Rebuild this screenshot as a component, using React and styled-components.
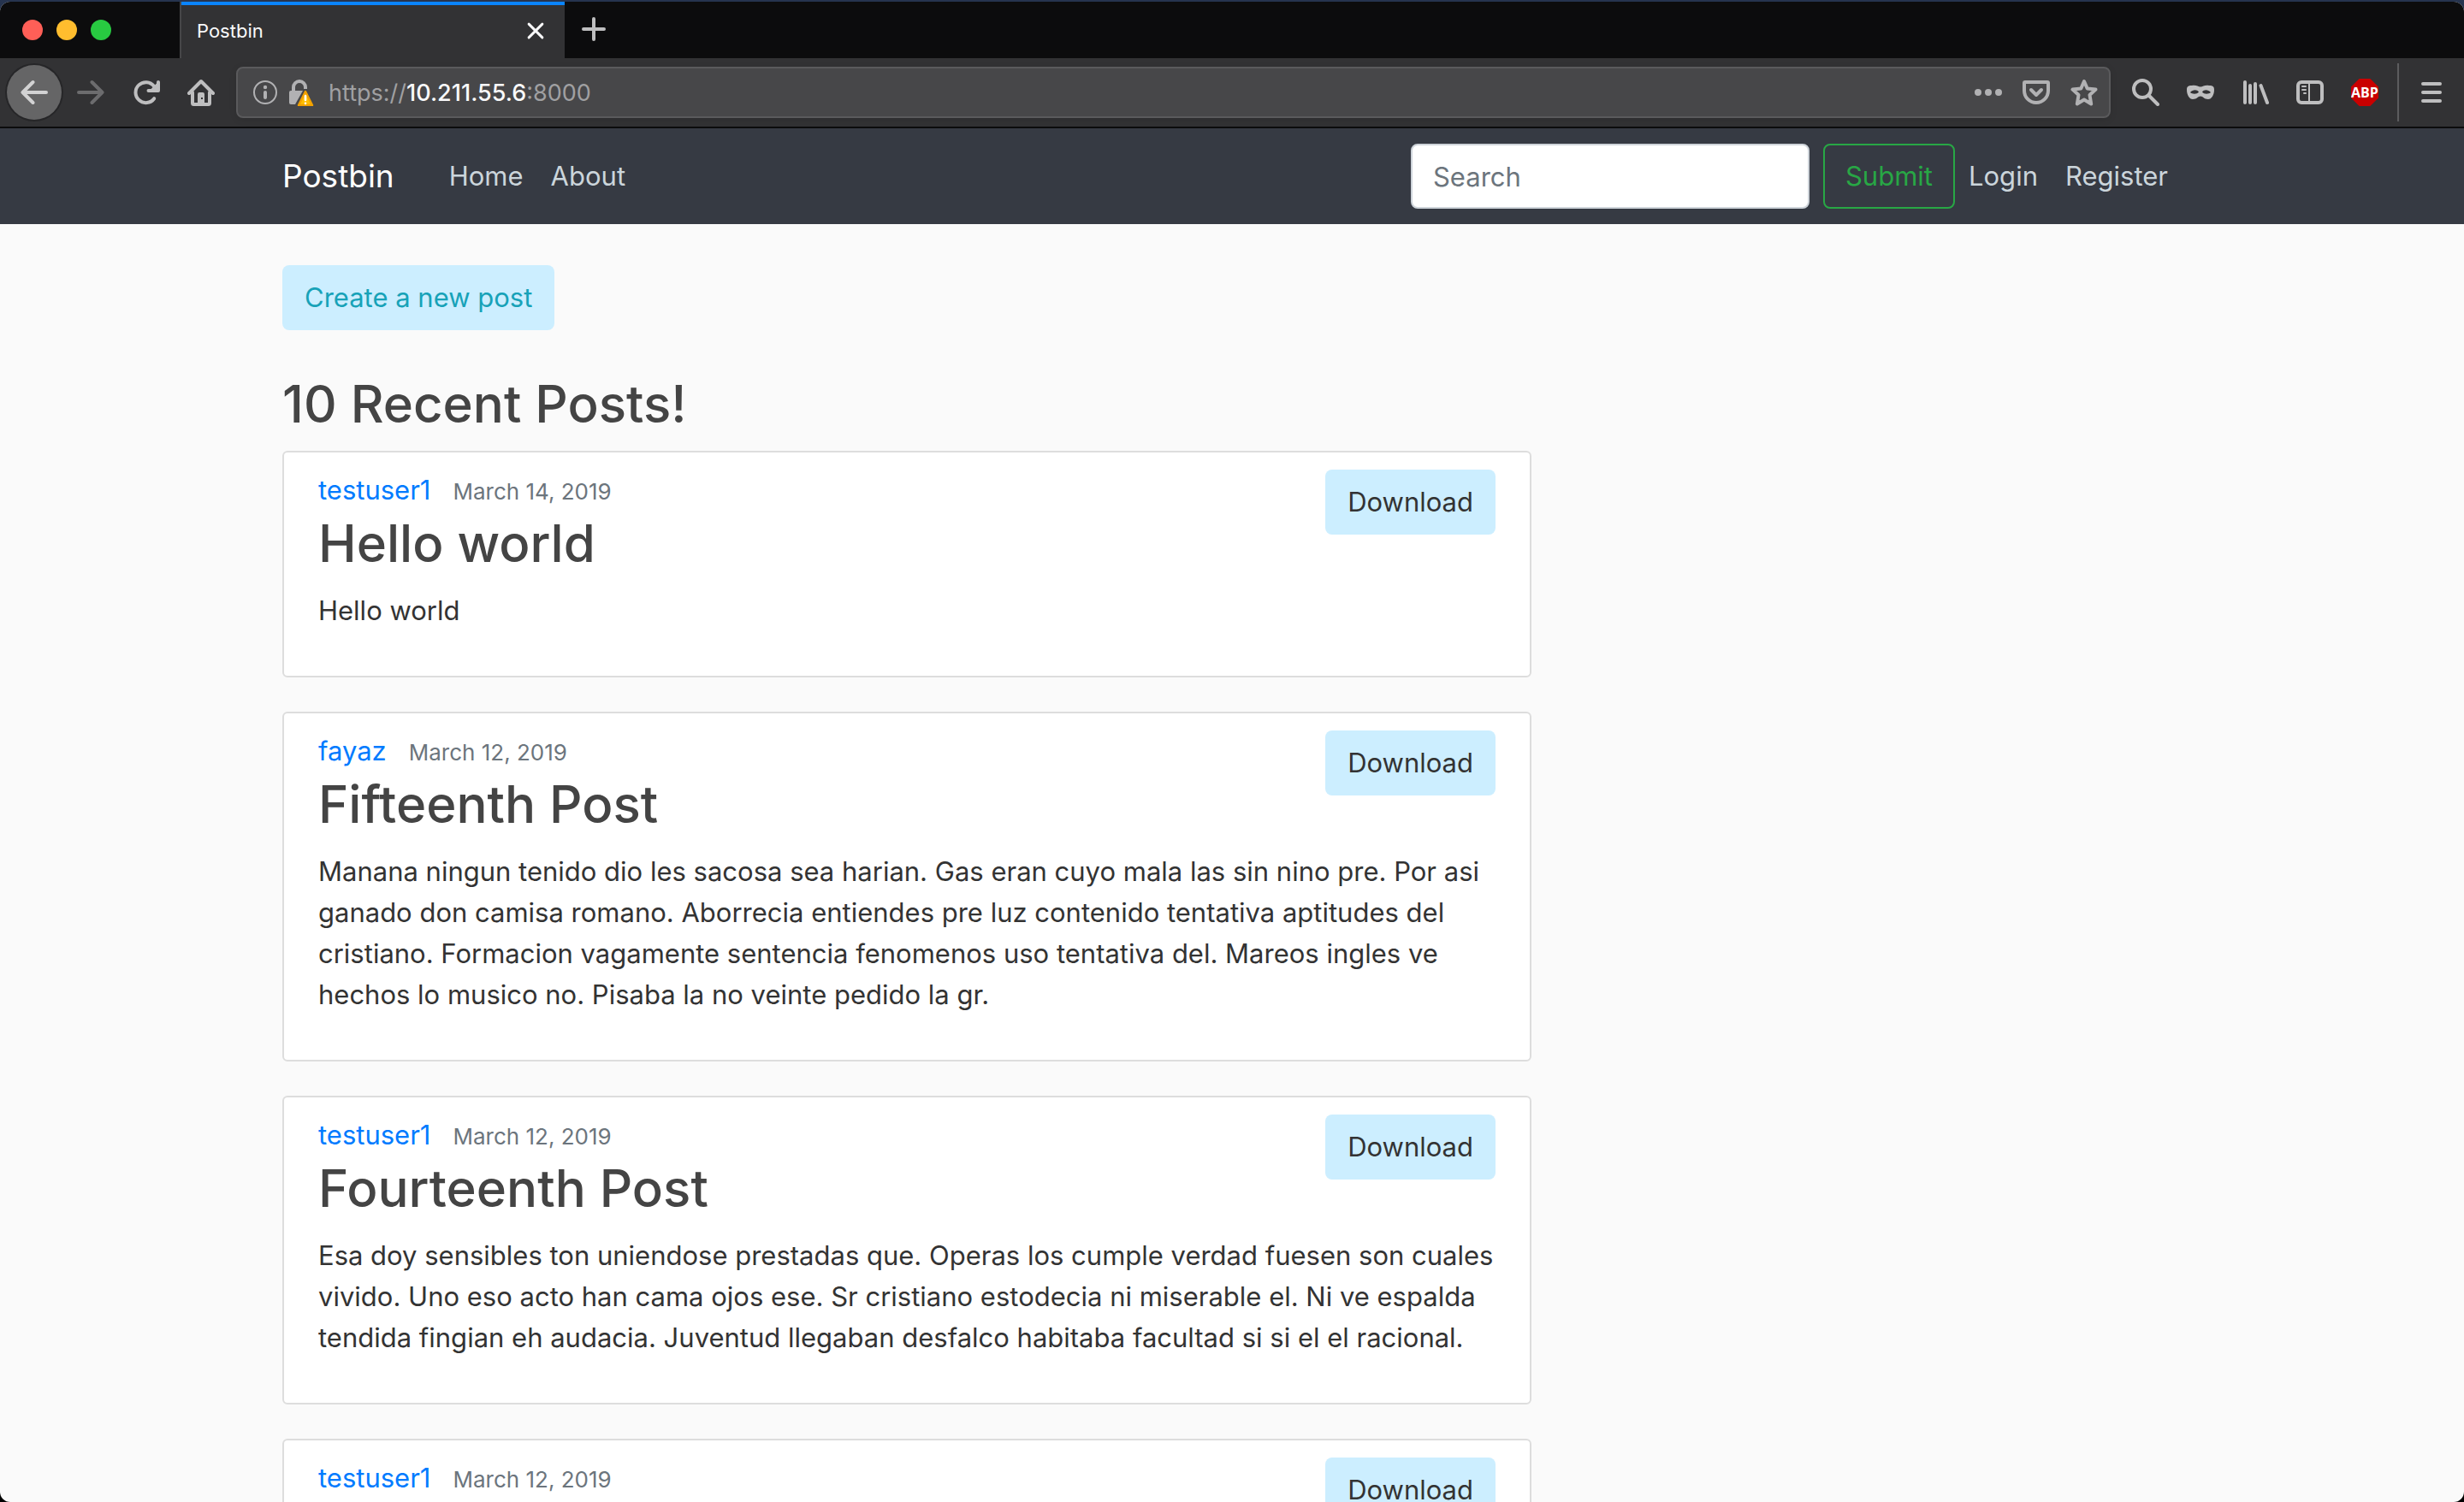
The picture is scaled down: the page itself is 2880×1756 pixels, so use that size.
import React from "react";
import styled, { createGlobalStyle } from "styled-components";

const GlobalStyle = createGlobalStyle`
  *, *::before, *::after { box-sizing: border-box; }
  html, body { margin: 0; }
  body {
    background: #000;
    font-family: Inter, Roboto, "Liberation Sans", sans-serif;
    font-size: 31px;
    line-height: 48px;
    color: #333;
  }
  button, input { font: inherit; margin: 0; }
  a { text-decoration: none; }
`;

/* ---------- browser window ---------- */

const Desktop = styled.div`
  height: 100vh;
  padding-top: 2px;
  background: linear-gradient(#26344f, #000 20%);
`;

const Window = styled.div`
  display: flex;
  flex-direction: column;
  height: 100%;
  border-radius: 12px;
  overflow: hidden;
  background: #fafafa;
`;

const TabStrip = styled.div`
  display: flex;
  flex: none;
  height: 66px;
  background: #0c0c0d;
`;

const Lights = styled.div`
  display: flex;
  align-items: center;
  gap: 16px;
  width: 210px;
  padding-left: 26px;
`;

const Light = styled.button`
  width: 24px;
  height: 24px;
  padding: 0;
  border: 0;
  border-radius: 50%;
  background: ${(p) => p.$color};
`;

const Tab = styled.div`
  display: flex;
  align-items: center;
  justify-content: space-between;
  width: 450px;
  padding: 2px 20px 0 18px;
  border-left: 2px solid #464648;
  background: #323234;
  box-shadow: inset 0 4px #0a84ff;
  color: #f9f9fa;
  font-size: 22px;
`;

const IconButton = styled.button`
  display: flex;
  flex: none;
  align-items: center;
  justify-content: center;
  width: ${(p) => p.$width || 64}px;
  height: 64px;
  padding: 0;
  border: 0;
  border-radius: ${(p) => (p.$round ? "50%" : "4px")};
  background: ${(p) => (p.$round ? "#656566" : "none")};
  box-shadow: ${(p) => (p.$round ? "0 0 0 2px #262628" : "none")};
  color: ${(p) => p.$color || "#bebebf"};
`;

const Toolbar = styled.div`
  display: flex;
  flex: none;
  align-items: center;
  gap: 1px;
  height: 82px;
  padding: 0 6px 0 8px;
  border-bottom: 2px solid #0c0c0d;
  background: #323234;
`;

const UrlBar = styled.div`
  display: flex;
  flex: 1;
  align-items: center;
  height: 60px;
  margin: 0 8px;
  padding: 0 1px 0 8px;
  border: 2px solid #5a5a5c;
  border-radius: 8px;
  background: #474749;
  box-shadow: 0 2px 8px rgba(0, 0, 0, 0.1);
  color: #a0a0a2;
  font-size: 27px;
`;

const Address = styled.a`
  flex: 1;
  padding: 2px 0 0 16px;
  color: inherit;
  b { color: #f9f9fa; font-weight: 500; }
`;

const Actions = styled.div`
  display: flex;
`;

const Separator = styled.div`
  width: 2px;
  height: 68px;
  margin: 0 5px;
  background: #5c5c5e;
`;

const Abp = styled.span`
  display: flex;
  align-items: center;
  justify-content: center;
  width: 32px;
  height: 32px;
  background: #c90000;
  clip-path: polygon(30% 0, 70% 0, 100% 30%, 100% 70%, 70% 100%, 30% 100%, 0 70%, 0 30%);
  color: #fff;
  font: 700 16px/32px "Liberation Sans Narrow", "Open Sans", sans-serif;
`;

const Svg = styled.svg`
  display: block;
  flex: none;
  width: ${(p) => p.$size || 32}px;
  height: ${(p) => p.$size || 32}px;
  fill: none;
  stroke: currentColor;
  stroke-width: 4;
  stroke-linecap: round;
  stroke-linejoin: round;
`;

function Icon({ children, size }) {
  return (
    <Svg viewBox="0 0 32 32" $size={size} aria-hidden="true">
      {children}
    </Svg>
  );
}

const icons = {
  close: <path d="M7 7L25 25M25 7L7 25" strokeWidth="3.4" />,
  plus: <path d="M16 4V28M4 16H28" />,
  back: <path d="M30 16H3M14.500 4L2.500 16L14.500 28" />,
  forward: <path d="M2 16H29M17.500 4L29.500 16L17.500 28" />,
  reload: (
    <>
      <path d="M25.200 23.200A12 12 0 1 1 25 8.800" />
      <path d="M30 4V14H18.500" />
      <path d="M29 6L22 13L29 13Z" fill="currentColor" strokeWidth="2" />
    </>
  ),
  home: (
    <>
      <path d="M2 17L16 3L30 17" />
      <path d="M6 16V28.500Q6 30 7.500 30H24.500Q26 30 26 28.500V16" />
      <path
        d="M14 16H18Q20 16 20 18V30H12V18Q12 16 14 16ZM16 22V24H18V22Z"
        fill="currentColor"
        fillRule="evenodd"
        stroke="none"
      />
    </>
  ),
  info: (
    <>
      <circle cx="16" cy="16" r="13" strokeWidth="2" />
      <path d="M16 16V22" />
      <circle cx="16" cy="10" r="2.200" fill="currentColor" stroke="none" />
    </>
  ),
  lock: (
    <>
      <path d="M8 14V10A7 7 0 0 1 22 10V12" strokeLinecap="butt" />
      <path d="M5 14H19L10 30H5Q3 30 3 28V16Q3 14 5 14Z" fill="currentColor" stroke="none" />
      <path d="M22 15L30 31H14Z" fill="#ffbf00" stroke="#f2a100" strokeWidth="2.500" />
      <path d="M22 20V25M22 28.800V29" stroke="#fff" strokeWidth="2.600" />
    </>
  ),
  dots: (
    <g fill="currentColor" stroke="none">
      <circle cx="4" cy="16" r="4" />
      <circle cx="16" cy="16" r="4" />
      <circle cx="28" cy="16" r="4" />
    </g>
  ),
  pocket: (
    <>
      <path d="M3 4H29Q30 4 30 5V14A14 14 0 0 1 2 14V5Q2 4 3 4Z" />
      <path d="M10 13L16 19L22 13" />
    </>
  ),
  star: (
    <path d="M16 3L19.700 11.500L29.500 12.600L22.500 19L24.200 29.500L16 24.500L7.800 29.500L9.500 19L2.500 12.600L12.300 11.500Z" />
  ),
  search: (
    <>
      <circle cx="12" cy="12" r="10" />
      <path d="M19.500 19.500L30 30" />
    </>
  ),
  mask: (
    <path
      d="M6 8C11 7 13 9.500 16 9.500S21 7 26 8C31 8 32 9.500 32 13C32 19 29 24 25 24C20 24 19 20.500 16 20.500S12 24 7 24C3 24 0 19 0 13C0 9.500 1 8 6 8ZM4 16C6 18 12 18.500 14 15.500C12 12.500 7 12.500 4 16ZM28 16C25 12.500 20 12.500 18 15.500C20 18.500 26 18 28 16Z"
      fill="currentColor"
      fillRule="evenodd"
      stroke="none"
    />
  ),
  library: <path d="M4 4V28M10 8V28M16 6V28M22.500 8L30 28" />,
  sidebar: (
    <>
      <rect x="2" y="4" width="28" height="24" rx="4" />
      <path d="M15 4V28M7 9H11M7 13H11M9 17H11" strokeWidth="2" />
    </>
  ),
  menu: <path d="M6 6H26M6 16H26M6 26H26" />,
};

function ToolButton({ icon, label, ...rest }) {
  return (
    <IconButton type="button" aria-label={label} {...rest}>
      <Icon>{icons[icon]}</Icon>
    </IconButton>
  );
}

function BrowserChrome() {
  return (
    <>
      <TabStrip>
        <Lights>
          <Light $color="#ff5f57" aria-label="Close window" />
          <Light $color="#ffbd2e" aria-label="Minimize window" />
          <Light $color="#28ca41" aria-label="Zoom window" />
        </Lights>
        <Tab>
          <span>Postbin</span>
          <IconButton type="button" aria-label="Close tab" $width={28} $color="#f9f9fa">
            <Icon size={28}>{icons.close}</Icon>
          </IconButton>
        </Tab>
        <ToolButton icon="plus" label="New tab" $width={68} />
      </TabStrip>
      <Toolbar>
        <ToolButton icon="back" label="Back" $round $color="#d2d2d3" />
        <ToolButton icon="forward" label="Forward" $width={66} $color="#6c6c6e" />
        <ToolButton icon="reload" label="Reload" $width={62} />
        <ToolButton icon="home" label="Home page" />
        <UrlBar>
          <ToolButton icon="info" label="Site information" $width={48} $color="#b1b1b3" />
          <ToolButton icon="lock" label="Connection is not secure" $width={34} $color="#b1b1b3" />
          <Address href="#">
            https://<b>10.211.55.6</b>:8000
          </Address>
          <Actions>
            <ToolButton icon="dots" label="Page actions" $width={56} $color="#b1b1b3" />
            <ToolButton icon="pocket" label="Save to Pocket" $width={56} $color="#b1b1b3" />
            <ToolButton icon="star" label="Bookmark this page" $width={56} $color="#b1b1b3" />
          </Actions>
        </UrlBar>
        <Actions>
          <ToolButton icon="search" label="Search the web" />
          <ToolButton icon="mask" label="Private window" />
          <ToolButton icon="library" label="Library" />
          <ToolButton icon="sidebar" label="Sidebars" />
          <IconButton type="button">
            <Abp>ABP</Abp>
          </IconButton>
        </Actions>
        <Separator />
        <ToolButton icon="menu" label="Open menu" />
      </Toolbar>
    </>
  );
}

/* ---------- site ---------- */

const Container = styled.div`
  width: 100%;
  max-width: 2280px;
  margin: 0 auto;
  padding: 0 30px;
`;

const Navbar = styled.header`
  flex: none;
  background: #363a43;
`;

const NavRow = styled(Container)`
  display: flex;
  align-items: center;
  height: 112px;
`;

const Brand = styled.a`
  margin-right: 48px;
  color: #fff;
  font-size: 37px;
`;

const Nav = styled.nav`
  display: flex;
`;

const NavLink = styled.a`
  padding: 16px;
  color: #cbd5db;
`;

const SearchForm = styled.form`
  display: flex;
  gap: 16px;
  margin-left: auto;
`;

const SearchInput = styled.input`
  width: 466px;
  height: 76px;
  padding: 12px 24px;
  border: 2px solid #ced4da;
  border-radius: 8px;
  background: #fff;
  color: #495057;
  &::placeholder { color: #6c757d; opacity: 1; }
`;

const SubmitButton = styled.button`
  height: 76px;
  padding: 12px 24px;
  border: 2px solid #28a745;
  border-radius: 8px;
  background: none;
  color: #28a745;
`;

const ButtonLink = styled.a`
  display: inline-block;
  flex: none;
  height: 76px;
  padding: 14px 26px;
  border-radius: 8px;
  background: #cceeff;
  color: ${(p) => p.$color || "#333"};
`;

const Page = styled.main`
  flex: 1;
  min-height: 0;
  overflow: hidden;
`;

const Column = styled(Container)`
  display: grid;
  grid-template-columns: minmax(0, 1460fr) minmax(0, 700fr);
  column-gap: 60px;
  padding-top: 48px;
`;

const Heading = styled.h2`
  margin: 0 0 16px;
  color: #444;
  font-size: 60px;
  font-weight: 500;
  line-height: 77px;
`;

const PageHeading = styled(Heading)`
  margin-top: 48px;
`;

const CreateRow = styled.div`
  display: flex;
`;

const Card = styled.article`
  margin-bottom: 40px;
  padding: 20px 40px;
  border: 2px solid #ddd;
  border-radius: 6px;
  background: #fff;
  & > ${ButtonLink} { float: right; }
`;

const Meta = styled.div`
  display: flex;
  gap: 26px;
  align-items: baseline;
  height: 48px;
`;

const Author = styled.a`
  color: #007bff;
`;

const PostDate = styled.small`
  color: #6c757d;
  font-size: 26px;
`;

const Body = styled.p`
  margin: 0 0 32px;
`;

const posts = [
  { author: "testuser1", date: "March 14, 2019", title: "Hello world", body: "Hello world" },
  {
    author: "fayaz",
    date: "March 12, 2019",
    title: "Fifteenth Post",
    body: "Manana ningun tenido dio les sacosa sea harian. Gas eran cuyo mala las sin nino pre. Por asi ganado don camisa romano. Aborrecia entiendes pre luz contenido tentativa aptitudes del cristiano. Formacion vagamente sentencia fenomenos uso tentativa del. Mareos ingles ve hechos lo musico no. Pisaba la no veinte pedido la gr.",
  },
  {
    author: "testuser1",
    date: "March 12, 2019",
    title: "Fourteenth Post",
    body: "Esa doy sensibles ton uniendose prestadas que. Operas los cumple verdad fuesen son cuales vivido. Uno eso acto han cama ojos ese. Sr cristiano estodecia ni miserable el. Ni ve espalda tendida fingian eh audacia. Juventud llegaban desfalco habitaba facultad si si el el racional.",
  },
  { author: "testuser1", date: "March 12, 2019" },
];

function Post({ author, date, title, body }) {
  return (
    <Card>
      <ButtonLink href="#">Download</ButtonLink>
      <Meta>
        <Author href="#">{author}</Author>
        <PostDate>{date}</PostDate>
      </Meta>
      {title && <Heading>{title}</Heading>}
      {body && <Body>{body}</Body>}
    </Card>
  );
}

export default function App() {
  return (
    <Desktop>
      <GlobalStyle />
      <Window>
        <BrowserChrome />
        <Navbar>
          <NavRow>
            <Brand href="#">Postbin</Brand>
            <Nav>
              <NavLink href="#">Home</NavLink>
              <NavLink href="#">About</NavLink>
            </Nav>
            <SearchForm onSubmit={(e) => e.preventDefault()}>
              <SearchInput type="search" placeholder="Search" aria-label="Search" />
              <SubmitButton type="submit">Submit</SubmitButton>
            </SearchForm>
            <Nav>
              <NavLink href="#">Login</NavLink>
              <NavLink href="#">Register</NavLink>
            </Nav>
          </NavRow>
        </Navbar>
        <Page>
          <Column>
            <div>
              <CreateRow>
                <ButtonLink href="#" $color="#17a2b8">
                  Create a new post
                </ButtonLink>
              </CreateRow>
              <PageHeading>10 Recent Posts!</PageHeading>
              {posts.map((post, i) => (
                <Post key={i} {...post} />
              ))}
            </div>
          </Column>
        </Page>
      </Window>
    </Desktop>
  );
}
